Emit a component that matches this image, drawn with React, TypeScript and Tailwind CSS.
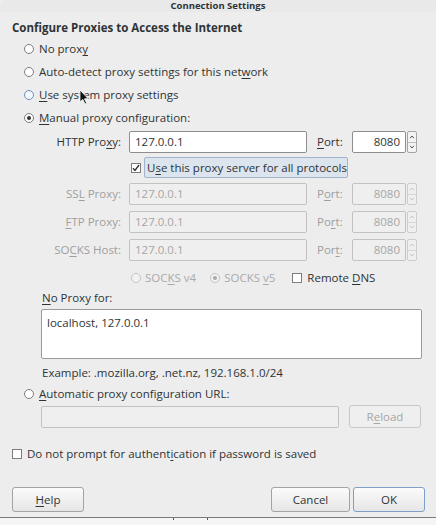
import React from "react";

const U = ({ c }: { c: string }) => (
  <span className="underline underline-offset-[2px] decoration-[1px]">{c}</span>
);

const Radio = ({
  checked = false,
  disabled = false,
  hover = false,
}: {
  checked?: boolean;
  disabled?: boolean;
  hover?: boolean;
}) => (
  <span
    className={
      "inline-flex items-center justify-center w-[10px] h-[10px] rounded-full border shrink-0 " +
      (disabled
        ? "border-[#c4c4c4] bg-[#f2f2f2]"
        : hover
        ? "border-[#6f8fbf] bg-[#f4f7fb]"
        : "border-[#7d7d7d] bg-white")
    }
  >
    {checked && (
      <span
        className={
          "w-[4px] h-[4px] rounded-full " + (disabled ? "bg-[#a8a8a8]" : "bg-[#2e3436]")
        }
      />
    )}
  </span>
);

const Check = ({ checked = false }: { checked?: boolean }) => (
  <span className="inline-flex items-center justify-center w-[10px] h-[10px] border border-[#7d7d7d] bg-white shrink-0">
    {checked && (
      <svg width="8" height="8" viewBox="0 0 8 8">
        <path d="M1 4.2 L3 6.4 L7 1" stroke="#2e3436" strokeWidth="1.4" fill="none" />
      </svg>
    )}
  </span>
);

const Spin = ({ disabled = false }: { disabled?: boolean }) => (
  <div className="flex h-[22px] gap-[1px]">
    <div
      className={
        "w-[54px] h-full border rounded-[2px] flex items-center justify-end pr-[5px] " +
        (disabled
          ? "border-[#c2c2c2] bg-[#efefef] text-[#a6a6a6]"
          : "border-[#8e8e8e] bg-white text-[#2e3436]")
      }
    >
      8080
    </div>
    <div
      className={
        "w-[10px] h-full border rounded-[2px] flex flex-col " +
        (disabled ? "border-[#cdcdcd] bg-[#efefef]" : "border-[#a5a5a5] bg-[#f3f3f3]")
      }
    >
      <div
        className={
          "flex-1 flex items-center justify-center border-b " +
          (disabled ? "border-[#d6d6d6]" : "border-[#bdbdbd]")
        }
      >
        <svg width="6" height="4" viewBox="0 0 6 4">
          <path
            d="M1 3.2 L3 1 L5 3.2"
            stroke={disabled ? "#c6c6c6" : "#555"}
            strokeWidth="1"
            fill="none"
          />
        </svg>
      </div>
      <div className="flex-1 flex items-center justify-center">
        <svg width="6" height="4" viewBox="0 0 6 4">
          <path
            d="M1 0.8 L3 3 L5 0.8"
            stroke={disabled ? "#c6c6c6" : "#555"}
            strokeWidth="1"
            fill="none"
          />
        </svg>
      </div>
    </div>
  </div>
);

const ProxyRow = ({
  label,
  port,
  disabled = false,
  className = "",
}: {
  label: React.ReactNode;
  port: React.ReactNode;
  disabled?: boolean;
  className?: string;
}) => (
  <div className={"flex items-center h-[22px] " + className}>
    <div
      className={
        "w-[121px] text-right whitespace-nowrap " +
        (disabled ? "text-[#9d9fa0]" : "text-[#2e3436]")
      }
    >
      {label}
    </div>
    <div
      className={
        "ml-[8px] w-[178px] h-full border rounded-[2px] flex items-center pl-[5px] " +
        (disabled
          ? "border-[#c2c2c2] bg-[#efefef] text-[#a6a6a6]"
          : "border-[#8e8e8e] bg-white text-[#2e3436]")
      }
    >
      127.0.0.1
    </div>
    <div
      className={
        "ml-[10px] w-[35px] whitespace-nowrap " +
        (disabled ? "text-[#9d9fa0]" : "text-[#2e3436]")
      }
    >
      {port}
    </div>
    <Spin disabled={disabled} />
  </div>
);

const Btn = ({
  children,
  className = "",
  focus = false,
  disabled = false,
}: {
  children: React.ReactNode;
  className?: string;
  focus?: boolean;
  disabled?: boolean;
}) => (
  <div
    className={
      "h-full flex items-center justify-center rounded-[3px] border " +
      (disabled
        ? "border-[#c8c8c8] bg-[#efefef] text-[#a6a6a6] "
        : focus
        ? "border-[#7f9fc9] bg-gradient-to-b from-[#fbfbfb] to-[#e6e6e6] text-[#2e3436] "
        : "border-[#a3a3a3] bg-gradient-to-b from-[#fbfbfb] to-[#e6e6e6] text-[#2e3436] ") +
      className
    }
  >
    {children}
  </div>
);

export default function App() {
  return (
    <div className="relative w-[436px] h-[525px] overflow-hidden bg-[#ededed] font-['Open_Sans',sans-serif] text-[11.5px] leading-none text-[#2e3436] whitespace-nowrap">
      {/* title bar */}
      <div className="h-[12px] flex items-center justify-center rounded-tl-[6px] bg-[#e9e9e9]">
        <span className="text-[9.5px] font-bold text-[#2e3436] -mt-[1px]">
          Connection Settings
        </span>
      </div>

      {/* heading */}
      <div className="h-[26px] pt-[6px] pl-[12px] flex items-center">
        <span className="font-bold text-[11.5px]">Configure Proxies to Access the Internet</span>
      </div>

      <div className="pl-[24px] flex flex-col">
        <div className="h-[22px] flex items-center gap-[5px]">
          <Radio />
          <span>
            No prox<U c="y" />
          </span>
        </div>
        <div className="h-[23px] flex items-center gap-[5px]">
          <Radio />
          <span>
            Auto-detect proxy settings for this net<U c="w" />ork
          </span>
        </div>
        <div className="h-[23px] flex items-center gap-[5px]">
          <Radio hover />
          <span>
            <U c="U" />se system proxy settings
          </span>
        </div>
        <div className="h-[23px] flex items-center gap-[5px]">
          <Radio checked />
          <span>
            <U c="M" />anual proxy configuration:
          </span>
        </div>
      </div>

      <ProxyRow
        className="mt-[2px]"
        label={
          <>
            HTTP Pro<U c="x" />y:
          </>
        }
        port={
          <>
            <U c="P" />ort:
          </>
        }
      />

      <div className="mt-[4px] h-[21px] flex items-center pl-[131px]">
        <Check checked />
        <div className="ml-[3px] h-full w-[204px] flex items-center pl-[2px] border border-[#9fb3cc] rounded-[2px] bg-[#dce4ee]">
          <span>
            U<U c="s" />e this proxy server for all protocols
          </span>
        </div>
      </div>

      <ProxyRow
        disabled
        className="mt-[5px]"
        label={
          <>
            SS<U c="L" /> Proxy:
          </>
        }
        port={
          <>
            P<U c="o" />rt:
          </>
        }
      />
      <ProxyRow
        disabled
        className="mt-[6px]"
        label={
          <>
            <U c="F" />TP Proxy:
          </>
        }
        port={
          <>
            Po<U c="r" />t:
          </>
        }
      />
      <ProxyRow
        disabled
        className="mt-[6px]"
        label={
          <>
            SO<U c="C" />KS Host:
          </>
        }
        port={
          <>
            Por<U c="t" />:
          </>
        }
      />

      <div className="mt-[7px] h-[20px] flex items-center pl-[131px]">
        <Radio disabled />
        <span className="ml-[4px] text-[#a8aaab]">
          SOC<U c="K" />S v4
        </span>
        <span className="ml-[14px] flex">
          <Radio checked disabled />
        </span>
        <span className="ml-[4px] text-[#a8aaab]">
          SOCKS <U c="v" />5
        </span>
        <span className="ml-[17px] flex">
          <Check />
        </span>
        <span className="ml-[5px]">
          Remote <U c="D" />NS
        </span>
      </div>

      <div className="mt-[2px] h-[16px] flex items-center pl-[42px]">
        <span>
          <U c="N" />o Proxy for:
        </span>
      </div>

      <div className="mt-[3px] ml-[41px] w-[381px] h-[50px] border border-[#9a9a9a] rounded-[2px] bg-white pl-[5px] pt-[7px]">
        localhost, 127.0.0.1
      </div>

      <div className="mt-[5px] h-[18px] flex items-center pl-[42px]">
        Example: .mozilla.org, .net.nz, 192.168.1.0/24
      </div>

      <div className="mt-[2px] h-[20px] flex items-center pl-[24px] gap-[5px]">
        <Radio />
        <span>
          <U c="A" />utomatic proxy configuration URL:
        </span>
      </div>

      <div className="mt-[2px] h-[22px] flex pl-[41px]">
        <div className="w-[298px] h-full border border-[#c2c2c2] rounded-[2px] bg-[#efefef]" />
        <div className="ml-[10px] w-[72px] h-[23px] -mt-[1px]">
          <Btn disabled>
            R<U c="e" />load
          </Btn>
        </div>
      </div>

      <div className="mt-[16px] h-[20px] flex items-center pl-[12px]">
        <Check />
        <span className="ml-[5px]">
          Do not prompt for authent<U c="i" />cation if password is saved
        </span>
      </div>

      <div className="mt-[23px] h-[25px] flex pl-[12px] pr-[11px]">
        <div className="w-[72px] h-full">
          <Btn>
            <U c="H" />elp
          </Btn>
        </div>
        <div className="flex-1" />
        <div className="w-[79px] h-full">
          <Btn>Cancel</Btn>
        </div>
        <div className="ml-[3px] w-[72px] h-full">
          <Btn focus>OK</Btn>
        </div>
      </div>

      <div className="mt-[5px] h-[1px] bg-[#7a7a7a]" />
      <div className="h-[10px] bg-[#f5f5f5] relative">
        <span className="absolute left-[173px] top-0 w-[1px] h-[2px] bg-[#555]" />
        <span className="absolute left-[207px] top-0 w-[1px] h-[2px] bg-[#555]" />
      </div>

      {/* mouse pointer */}
      <svg
        className="absolute left-[79px] top-[89px]"
        width="10"
        height="16"
        viewBox="0 0 10 16"
      >
        <path
          d="M1 1 L1 13 L3.8 10.4 L6 15 L7.6 14.2 L5.5 9.8 L9 9.6 Z"
          fill="#111"
          stroke="#fff"
          strokeWidth="0.8"
        />
      </svg>
    </div>
  );
}
